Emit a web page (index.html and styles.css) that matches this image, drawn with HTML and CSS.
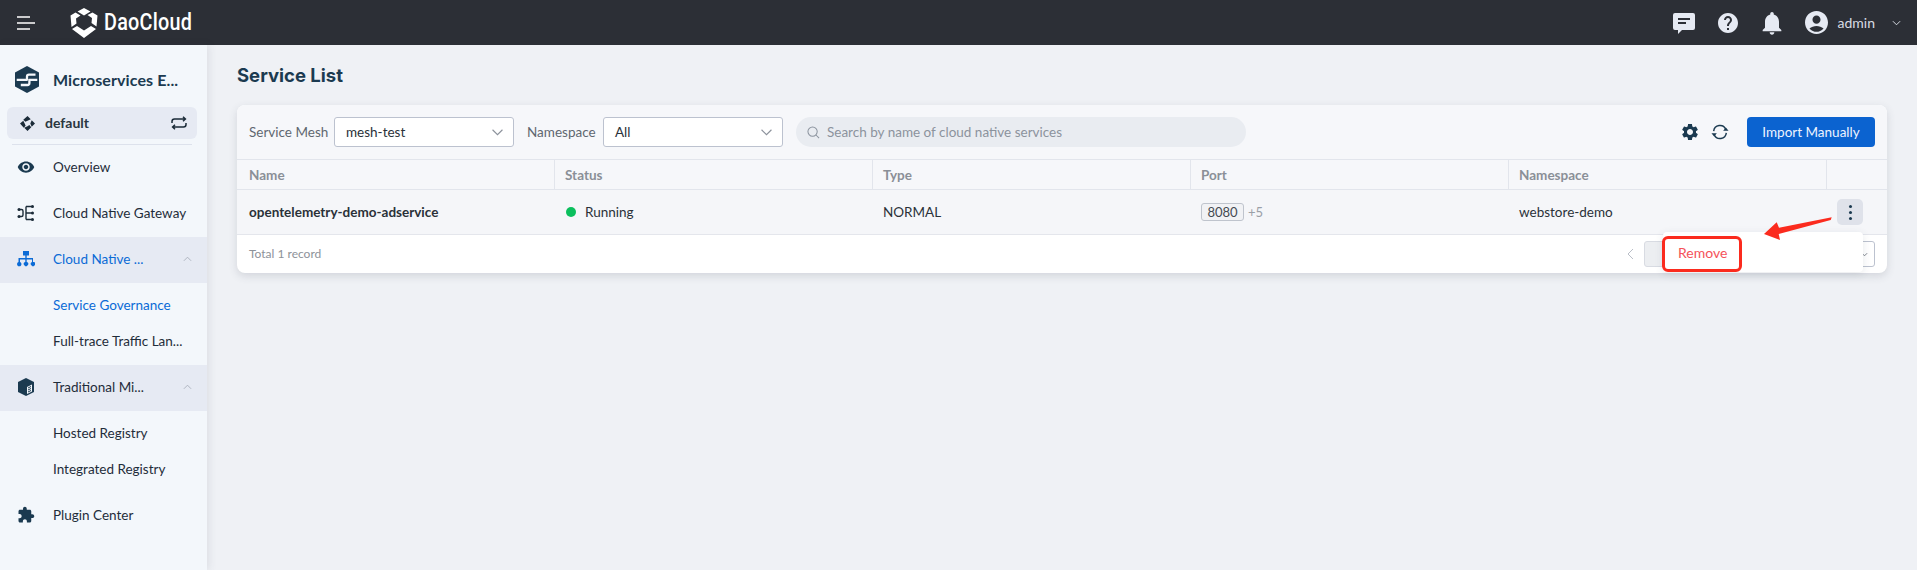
FILE: index.html
```html
<!DOCTYPE html>
<html lang="en">
<head>
<meta charset="utf-8">
<title>Service List</title>
<link rel="stylesheet" href="styles.css">
</head>
<body>
<header class="topbar">
  <svg class="burger" viewBox="0 0 18 14"><path d="M0 1h13M0 7h18M0 13h13" stroke="#fff" stroke-width="1.6" fill="none"/></svg>
  <svg class="logo" viewBox="0 0 28 30"><path fill="#fff" d="M14 0l6.500 3.500L14 7.500 7.500 3.500zM5.500 4.500l5 3-4.500 3 .5 5-5 3.500L.5 7.500zM22.500 4.500l5 3-1 11-5-3.500.5-5-4.500-3zM7 18l7 4.500L21 18l5 3-12 9-12-9z"/></svg>
  <span class="brand">DaoCloud</span>
  <div class="top-actions">
    <svg class="ti" viewBox="1 1 22 22"><path fill="#e6eaf3" fill-rule="evenodd" d="M3 2h18a2 2 0 0 1 2 2v13a2 2 0 0 1-2 2H10l-4 4v-4H3a2 2 0 0 1-2-2V4a2 2 0 0 1 2-2zm3 5v2h12V7zm0 4v2h8v-2z"/></svg>
    <svg class="help" viewBox="0 0 24 24"><path fill="#e6eaf3" d="M12 2C6.480 2 2 6.480 2 12s4.480 10 10 10 10-4.480 10-10S17.520 2 12 2zm1 17h-2v-2h2v2zm2.070-7.750l-.9.920C13.450 12.900 13 13.500 13 15h-2v-.5c0-1.100.45-2.100 1.170-2.830l1.240-1.260c.37-.36.59-.86.59-1.410 0-1.100-.9-2-2-2s-2 .9-2 2H8c0-2.210 1.790-4 4-4s4 1.790 4 4c0 .88-.36 1.680-.93 2.250z"/></svg>
    <svg class="bell" viewBox="0 0 24 24"><path fill="#e6eaf3" d="M12 22c1.100 0 2-.9 2-2h-4c0 1.100.89 2 2 2zm6-6v-5c0-3.070-1.640-5.640-4.500-6.320V4c0-.83-.67-1.500-1.500-1.500s-1.500.67-1.500 1.500v.68C7.630 5.360 6 7.920 6 11v5l-2 2v1h16v-1l-2-2z"/></svg>
    <svg class="avatar" viewBox="2 2 20 20"><path fill="#e6eaf3" d="M12 2C6.480 2 2 6.480 2 12s4.480 10 10 10 10-4.480 10-10S17.520 2 12 2zm0 4c1.930 0 3.500 1.570 3.500 3.500S13.930 13 12 13s-3.500-1.570-3.500-3.500S10.070 6 12 6zm0 14c-2.030 0-4.430-.82-6.140-2.880C7.550 15.800 9.680 15 12 15s4.450.8 6.140 2.120C16.430 19.180 14.030 20 12 20z"/></svg>
    <span class="user">admin</span>
    <svg class="usercaret" viewBox="0 0 10 6"><path d="M1 1l4 4 4-4" stroke="#e6eaf3" stroke-width="1" fill="none"/></svg>
  </div>
</header>
<div class="layout">
  <aside class="sidebar">
    <div class="product">
      <svg class="product-logo" viewBox="0 0 24 27"><path fill="#1b3a50" d="M12 0l12 6.500v14L12 27 0 20.500v-14z"/><path fill="none" stroke="#f3f7fb" stroke-width="2.300" stroke-linejoin="round" d="M20.500 8.600H14c-1.300 0-2 .7-2 2v3.200H1.700M22.300 13.800H14.400v3.200c0 1.300-.7 2-2 2H5.800"/></svg>
      <span class="product-name">Microservices E...</span>
    </div>
    <div class="workspace">
      <svg class="ws-icon" viewBox="0 0 16 16"><path fill="#1b2b38" d="M8 0l3.500 3.500L8 5 5.700 6 3.500 4zM12.500 4.500L16 8l-3.500 3.500L11 8zM3.500 5L5 8l1 2.300L4 12.500 0 8zM10 9.500l2 2.500L8 16l-3.500-3.500L8 11z"/></svg>
      <span class="ws-name">default</span>
      <svg class="ws-switch" viewBox="0 0 16 14"><path d="M1 7V5.500C1 4 2 3 3.500 3H14M12 .8L14.400 3 12 5.200M15 7v1.500c0 1.500-1 2.500-2.500 2.500H2M4 8.800L1.600 11 4 13.200" stroke="#1b2b38" stroke-width="1.500" fill="none"/></svg>
    </div>
    <div class="side-rule"></div>
    <nav class="nav">
      <a class="nav-item">
        <svg class="ni" viewBox="0 0 24 24"><path fill="#1b3a50" d="M12 4.500C7 4.500 2.730 7.610 1 12c1.730 4.390 6 7.500 11 7.500s9.270-3.110 11-7.500c-1.730-4.390-6-7.500-11-7.500zM12 17c-2.760 0-5-2.240-5-5s2.240-5 5-5 5 2.240 5 5-2.240 5-5 5zm0-8c-1.660 0-3 1.340-3 3s1.340 3 3 3 3-1.340 3-3-1.340-3-3-3z"/></svg>
        <span>Overview</span>
      </a>
      <a class="nav-item">
        <svg class="ni" viewBox="0 0 18 18"><g fill="none" stroke="#1b2b38" stroke-width="1.400"><path d="M2 5.500h2.500c1 0 1.500.5 1.500 1.500v4c0 1-.5 1.500-1.500 1.500H2M9 2.500v13M9 2.500h6M9 9h6M9 15.500h6"/></g><g fill="#1b2b38"><circle cx="2" cy="5.500" r="1.500"/><circle cx="2" cy="12.500" r="1.500"/><circle cx="15.500" cy="2.500" r="1.500"/><circle cx="15.500" cy="9" r="1.500"/><circle cx="15.500" cy="15.500" r="1.500"/></g></svg>
        <span>Cloud Native Gateway</span>
      </a>
      <a class="nav-item group active">
        <svg class="ni" viewBox="0 0 18 16"><path fill="#0b6bd6" d="M6 0h6v4.500H9.700V7H16v4h1a2.200 2.200 0 1 1-2 0V8.500H9.700V11h.3a2.200 2.200 0 1 1-2 0h.3V8.500H3V11a2.200 2.200 0 1 1-1.500 0V7h6.800V4.500H6z"/></svg>
        <span>Cloud Native ...</span>
        <svg class="caret" viewBox="0 0 10 6"><path d="M1 5l4-4 4 4" stroke="#a9b0bb" stroke-width="1" fill="none"/></svg>
      </a>
      <a class="nav-sub current">Service Governance</a>
      <a class="nav-sub">Full-trace Traffic Lan...</a>
      <a class="nav-item group second">
        <svg class="ni" viewBox="0 0 16 18"><path fill="#1b3a50" d="M8 0l8 4v10l-8 4-8-4V4z"/><path fill="#f3f7fb" d="M9 9l5-2.500v7L9 16z"/><path stroke="#1b3a50" d="M10 10l3-1.500M10 12l3-1.500M10 14l3-1.500" fill="none"/></svg>
        <span>Traditional Mi...</span>
        <svg class="caret" viewBox="0 0 10 6"><path d="M1 5l4-4 4 4" stroke="#a9b0bb" stroke-width="1" fill="none"/></svg>
      </a>
      <a class="nav-sub first-sub">Hosted Registry</a>
      <a class="nav-sub">Integrated Registry</a>
      <a class="nav-item plugin">
        <svg class="ni" viewBox="0 0 24 24"><path fill="#1b3a50" d="M20.500 11H19V7c0-1.100-.9-2-2-2h-4V3.500C13 2.120 11.880 1 10.500 1S8 2.120 8 3.500V5H4c-1.100 0-1.990.9-1.990 2v3.800H3.500c1.490 0 2.700 1.210 2.700 2.700s-1.210 2.700-2.700 2.700H2V20c0 1.100.9 2 2 2h3.800v-1.500c0-1.490 1.210-2.700 2.700-2.700 1.490 0 2.700 1.210 2.700 2.700V22H17c1.100 0 2-.9 2-2v-4h1.500c1.380 0 2.500-1.120 2.500-2.500S21.880 11 20.500 11z"/></svg>
        <span>Plugin Center</span>
      </a>
    </nav>
  </aside>
  <main class="main">
    <h1 class="title">Service List</h1>
    <section class="card">
      <div class="toolbar">
        <label class="flabel mesh-label">Service Mesh</label>
        <div class="select"><span>mesh-test</span><svg class="chev" viewBox="0 0 10 6"><path d="M.5.500L5 5 9.500.500" stroke="#8b919b" stroke-width="1" fill="none"/></svg></div>
        <label class="flabel ns">Namespace</label>
        <div class="select"><span>All</span><svg class="chev" viewBox="0 0 10 6"><path d="M.5.500L5 5 9.500.500" stroke="#8b919b" stroke-width="1" fill="none"/></svg></div>
        <div class="search">
          <svg class="mag" viewBox="0 0 14 14"><circle cx="6" cy="6" r="5" stroke="#8b939e" stroke-width="1.100" fill="none"/><path d="M9.700 9.700L13 13" stroke="#8b939e" stroke-width="1.100"/></svg>
          <span>Search by name of cloud native services</span>
        </div>
        <svg class="gear" viewBox="0 0 24 24"><path fill="#1b3a50" d="M19.140 12.940c.04-.3.060-.61.060-.94 0-.32-.02-.64-.07-.94l2.030-1.580c.18-.14.230-.41.120-.61l-1.920-3.320c-.12-.22-.37-.29-.59-.22l-2.390.96c-.5-.38-1.030-.7-1.620-.94l-.36-2.540c-.04-.24-.24-.41-.48-.41h-3.840c-.24 0-.43.170-.47.41l-.36 2.540c-.59.240-1.130.57-1.620.94l-2.390-.96c-.22-.08-.47 0-.59.220L2.740 8.870c-.12.210-.08.470.12.610l2.030 1.580c-.05.300-.09.630-.09.940s.02.640.07.940l-2.030 1.580c-.18.140-.23.410-.12.610l1.920 3.320c.12.220.37.290.59.220l2.390-.96c.5.380 1.030.7 1.620.94l.36 2.540c.05.240.24.410.48.410h3.840c.24 0 .44-.17.47-.41l.36-2.540c.59-.24 1.130-.56 1.620-.94l2.390.96c.22.080.47 0 .59-.22l1.920-3.320c.12-.22.070-.47-.12-.61l-2.010-1.580zM12 15.600c-1.980 0-3.600-1.620-3.600-3.600s1.620-3.600 3.600-3.600 3.600 1.620 3.600 3.600-1.620 3.600-3.600 3.600z"/></svg>
        <svg class="sync" viewBox="0 0 20 20"><g fill="none" stroke="#1b3a50" stroke-width="1.600"><path d="M3 9a7 7 0 0 1 13.400-2"/><path d="M17 11a7 7 0 0 1-13.400 2"/></g><path fill="#1b3a50" d="M13.500 8.500h6l-3-3.500zM.5 11.500h6l-3 3.500z"/></svg>
        <button class="primary">Import Manually</button>
      </div>
      <div class="row head">
        <div class="cell">Name</div><div class="cell">Status</div><div class="cell">Type</div><div class="cell">Port</div><div class="cell">Namespace</div><div class="cell"></div>
      </div>
      <div class="row body">
        <div class="cell strong">opentelemetry-demo-adservice</div>
        <div class="cell"><i class="dot"></i>Running</div>
        <div class="cell">NORMAL</div>
        <div class="cell"><span class="tag">8080</span><span class="more">+5</span></div>
        <div class="cell">webstore-demo</div>
        <div class="cell action"><button class="kebab"><i></i><i></i><i></i></button></div>
      </div>
      <div class="foot">
        <span class="total">Total 1 record</span>
        <svg class="prev" viewBox="0 0 7 12"><path d="M6 1L1 6l5 5" stroke="#b9bec7" stroke-width="1" fill="none"/></svg>
        <span class="page"></span>
        <span class="size"><svg class="sizecaret" viewBox="0 0 8 5"><path d="M1 1l3 3 3-3" stroke="#70767f" stroke-width="1" fill="none"/></svg></span>
      </div>
    </section>
  </main>
</div>
<div class="menu"><span class="menu-item">Remove</span></div>
<div class="highlight"></div>
<svg class="arrow" viewBox="0 0 70 30"><path fill="#fb2b1e" d="M68.700 6.300L67.700 9 15.700 23 17 29 1 23 13.700 11.300 16 16.700z"/></svg>
</body>
</html>
```
FILE: styles.css
```css
* { box-sizing: border-box; }
html, body { margin: 0; height: 100%; }
body {
  width: 1917px;
  height: 570px;
  overflow: hidden;
  position: relative;
  background: #eff1f5;
  color: #2a3138;
  font: 13.5px/20px Lato, "Open Sans", sans-serif;
}
svg { display: block; flex: none; }

.topbar {
  height: 45px;
  background: #2c2f36;
  display: flex;
  align-items: center;
  padding-left: 17px;
}
.burger { width: 18px; height: 14px; }
.logo { width: 28px; height: 30px; margin-left: 35px; }
.brand {
  margin-left: 6px;
  color: #fff;
  font: 500 23px/30px Roboto, sans-serif;
  letter-spacing: .3px;
  transform: scaleX(.86);
  transform-origin: left center;
}
.top-actions { margin-left: auto; display: flex; align-items: center; padding-right: 16px; }
.ti { width: 22px; height: 22px; }
.help { width: 24px; height: 24px; margin-left: 21px; }
.bell { width: 28px; height: 28px; margin-left: 18px; }
.avatar { width: 23px; height: 23px; margin-left: 19px; }
.user { margin-left: 10px; color: #d8dce3; font-size: 14px; }
.usercaret { width: 9px; height: 6px; margin-left: 17px; }

.layout { display: flex; height: 525px; }
.sidebar {
  width: 207px;
  flex: none;
  background: #f3f7fb;
  box-shadow: 2px 0 8px rgba(60, 70, 90, .1);
  display: flex;
  flex-direction: column;
  position: relative;
}
.product { display: flex; align-items: center; height: 27px; margin: 21px 0 0 15px; }
.product-logo { width: 24px; height: 27px; }
.product-name { margin-left: 14px; font-size: 16px; font-weight: 700; color: #1b3a50; letter-spacing: .1px; }
.workspace {
  margin: 14px 10px 0 7px;
  height: 32px;
  border-radius: 6px;
  background: #e6eaf3;
  display: flex;
  align-items: center;
  padding: 0 10px 0 13px;
}
.ws-icon { width: 15px; height: 15px; }
.ws-name { margin-left: 10px; font-weight: 700; font-size: 14px; color: #2a3740; }
.ws-switch { width: 16px; height: 14px; margin-left: auto; }
.side-rule { height: 1px; margin: 5px 15px 0 12px; background: #dde2ec; }
.nav { display: flex; flex-direction: column; }
.nav-item { height: 46px; display: flex; align-items: center; padding: 0 15px 2px 17px; color: #1f2d3a; }
.ni { width: 18px; height: 18px; margin-right: 18px; }
.group { background: #e6eaf3; }
.active { color: #0b6bd6; }
.caret { width: 9px; height: 6px; margin-left: auto; }
.nav-sub { height: 36px; display: flex; align-items: center; padding-left: 53px; color: #1f2d3a; }
.nav-sub.current { color: #0b6bd6; margin-top: 4px; }
.first-sub { margin-top: 4px; }
.second { margin-top: 6px; }
.plugin { margin-top: 6px; }

.main { flex: 1; padding: 0 30px; min-width: 0; }
.title {
  margin: 0;
  padding-top: 16px;
  height: 60px;
  font: 700 18.5px/28px Inter, Roboto, sans-serif;
  color: #1b3a50;
}
.card {
  background: #fff;
  border-radius: 8px;
  box-shadow: 0 3px 8px rgba(60, 70, 90, .16);
  height: 168px;
  overflow: hidden;
}
.toolbar {
  height: 54px;
  background: #f6f7fa;
  display: flex;
  align-items: center;
  padding: 0 12px;
}
.flabel { color: #5f6770; }
.mesh-label { width: 85px; }
.flabel.ns { width: 76px; margin-left: 13px; }
.select {
  width: 180px;
  height: 30px;
  background: #fff;
  border: 1px solid #bcc2cf;
  border-radius: 3px;
  display: flex;
  align-items: center;
  justify-content: space-between;
  padding: 0 10px 0 11px;
  color: #2a3138;
}
.chev { width: 11px; height: 7px; }
.search {
  margin-left: 13px;
  width: 450px;
  height: 30px;
  border-radius: 15px;
  background: #e9ecf1;
  display: flex;
  align-items: center;
  padding-left: 11px;
  color: #8c939d;
}
.mag { width: 13px; height: 13px; margin-right: 7px; }
.gear { width: 20px; height: 20px; margin-left: auto; }
.sync { width: 18px; height: 18px; margin-left: 11px; }
.primary {
  margin-left: 18px;
  width: 128px;
  height: 30px;
  border: 0;
  border-radius: 4px;
  background: #0b63d0;
  color: #eef4ff;
  font: inherit;
}
.row { display: grid; grid-template-columns: 318px 318px 318px 318px 318px 60px; }
.head { height: 31px; background: #f6f7fa; border-top: 1px solid #e2e5ec; border-bottom: 1px solid #e2e5ec; color: #8a8f97; font-weight: 700; }
.body { height: 45px; background: #f5f6f9; border-bottom: 1px solid #e4e6ec; }
.cell { display: flex; align-items: center; padding-left: 10px; min-width: 0; }
.cell:first-child { padding-left: 12px; }
.head .cell { border-right: 1px solid #e2e5ec; }
.head .cell:last-child { border-right: 0; }
.strong { font-weight: 700; color: #2a3138; }
.dot { width: 10px; height: 10px; border-radius: 50%; background: #0bbf5d; margin: 0 9px 0 1px; }
.tag {
  width: 43px;
  height: 18px;
  border: 1px solid #bfc4cd;
  border-radius: 3px;
  background: #f1f2f5;
  font-size: 13px;
  line-height: 16px;
  text-align: center;
  color: #444a52;
}
.more { margin-left: 4px; color: #9a9fa7; font-size: 13px; }
.action { padding-left: 10px; }
.kebab {
  width: 26px;
  height: 26px;
  border: 0;
  padding: 0;
  border-radius: 5px;
  background: #dfe2ea;
  display: flex;
  flex-direction: column;
  align-items: center;
  justify-content: center;
  gap: 3px;
}
.kebab i { width: 3px; height: 3px; border-radius: 50%; background: #1b3a50; }
.foot { height: 38px; display: flex; align-items: center; padding: 0 12px; }
.total { color: #8d9299; font-size: 12px; }
.prev { width: 7px; height: 12px; margin-left: auto; }
.page { width: 59px; height: 26px; margin-left: 10px; background: #eceef1; border: 1px solid #d8dbe2; border-radius: 3px; }
.size {
  width: 100px;
  height: 26px;
  margin-left: 72px;
  border: 1px solid #bcc2cf;
  border-radius: 3px;
  display: flex;
  align-items: center;
  justify-content: flex-end;
  padding-right: 6px;
}
.sizecaret { width: 7px; height: 5px; }

.menu {
  position: absolute;
  left: 1663px;
  top: 232px;
  width: 200px;
  height: 40px;
  background: #fff;
  border-radius: 4px;
  box-shadow: 0 2px 8px rgba(60, 70, 90, .12);
  display: flex;
  align-items: center;
  padding-left: 15px;
}
.menu-item { color: #f5525a; font-size: 14px; margin-top: 2px; }
.highlight {
  position: absolute;
  left: 1662px;
  top: 236px;
  width: 80px;
  height: 36px;
  border: 3px solid #fb2b1e;
  border-radius: 6px;
}
.arrow { position: absolute; left: 1763px; top: 211px; width: 70px; height: 30px; }
```
